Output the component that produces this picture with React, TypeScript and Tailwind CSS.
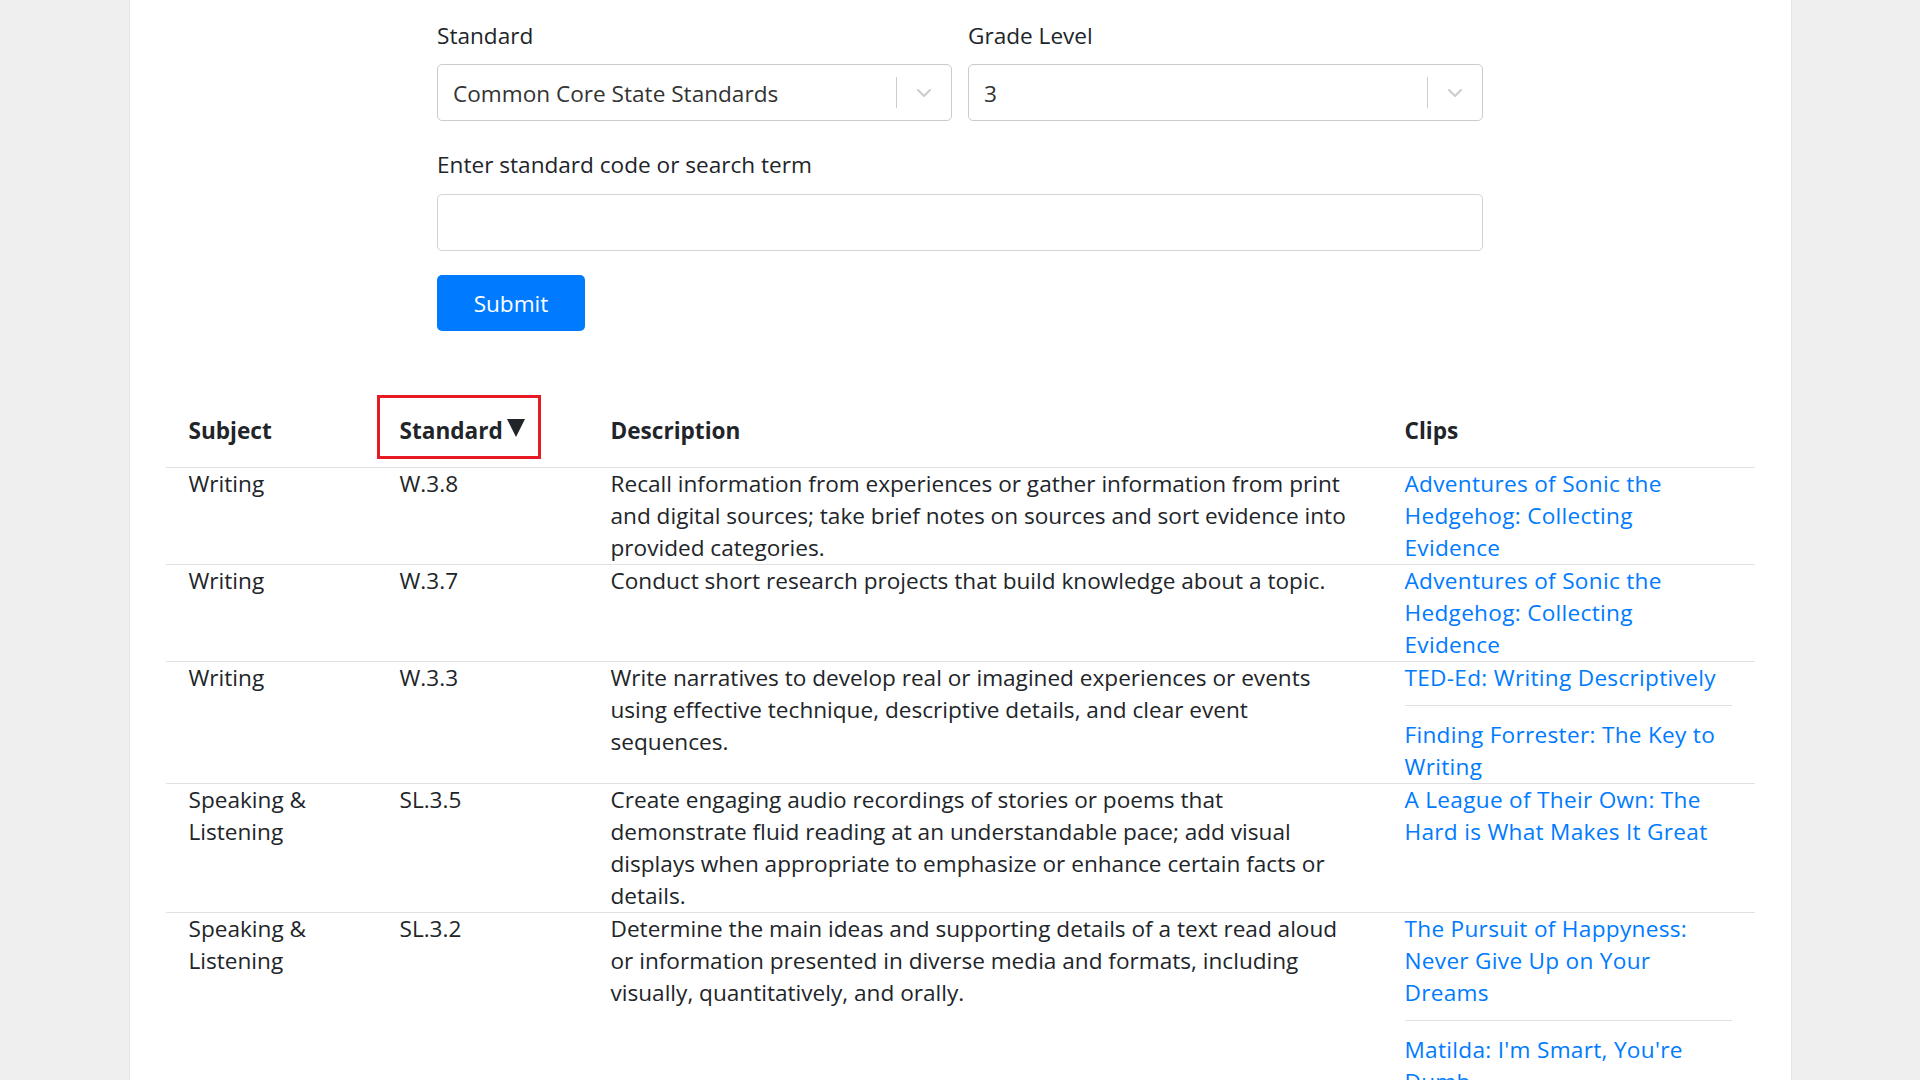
import { ChevronDown } from 'lucide-react'

interface Row {
  subject: string
  code: string
  description: string
  clips: string[]
}

const rows: Row[] = [
  {
    subject: 'Writing',
    code: 'W.3.8',
    description:
      'Recall information from experiences or gather information from print and digital sources; take brief notes on sources and sort evidence into provided categories.',
    clips: ['Adventures of Sonic the Hedgehog: Collecting Evidence'],
  },
  {
    subject: 'Writing',
    code: 'W.3.7',
    description: 'Conduct short research projects that build knowledge about a topic.',
    clips: ['Adventures of Sonic the Hedgehog: Collecting Evidence'],
  },
  {
    subject: 'Writing',
    code: 'W.3.3',
    description:
      'Write narratives to develop real or imagined experiences or events using effective technique, descriptive details, and clear event sequences.',
    clips: ['TED-Ed: Writing Descriptively', 'Finding Forrester: The Key to Writing'],
  },
  {
    subject: 'Speaking & Listening',
    code: 'SL.3.5',
    description:
      'Create engaging audio recordings of stories or poems that demonstrate fluid reading at an understandable pace; add visual displays when appropriate to emphasize or enhance certain facts or details.',
    clips: ['A League of Their Own: The Hard is What Makes It Great'],
  },
  {
    subject: 'Speaking & Listening',
    code: 'SL.3.2',
    description:
      'Determine the main ideas and supporting details of a text read aloud or information presented in diverse media and formats, including visually, quantitatively, and orally.',
    clips: ['The Pursuit of Happyness: Never Give Up on Your Dreams', "Matilda: I'm Smart, You're Dumb"],
  },
]

function SelectBox({ value }: { value: string }) {
  return (
    <div className="flex h-[57px] items-center rounded-[5px] border border-[#cccccc] bg-white">
      <div className="flex-1 pt-[2px] pl-[15px] text-[#333333]">{value}</div>
      <div className="h-[31px] w-px bg-[#cccccc]" />
      <div className="flex w-[54px] items-center justify-center text-[#cccccc]">
        <ChevronDown size={24} strokeWidth={2} />
      </div>
    </div>
  )
}

export default function App() {
  return (
    <div
      className="min-h-screen bg-[#efefef] text-[22.6px] leading-[32px] text-[#212529]"
      style={{ fontFamily: '"Segoe UI", "Open Sans", "Noto Sans", sans-serif' }}
    >
      <div className="mx-auto min-h-screen w-[1663px] border-x border-[#e4e4e4] bg-white px-[36px] pt-[20px]">
        {/* Search form */}
        <div className="mx-auto w-[1046px]">
          <div className="grid grid-cols-2 gap-x-[16px]">
            <div>
              <label className="mb-[12px] block">Standard</label>
              <SelectBox value="Common Core State Standards" />
            </div>
            <div>
              <label className="mb-[12px] block">Grade Level</label>
              <SelectBox value="3" />
            </div>
          </div>
          <div className="mt-[28px]">
            <label className="mb-[13px] block">Enter standard code or search term</label>
            <input className="block h-[57px] w-full rounded-[5px] border border-[#ced4da] px-[16px] outline-none" />
          </div>
          <button className="mt-[24px] h-[56px] w-[148px] rounded-[5px] bg-[#007bff] pt-[2px] text-white">Submit</button>
        </div>

        {/* Results */}
        <table className="mt-[64px] w-full table-fixed border-collapse">
          <colgroup>
            <col className="w-[211px]" />
            <col className="w-[211px]" />
            <col className="w-[794px]" />
            <col />
          </colgroup>
          <thead>
            <tr>
              <th className="border-b border-[#dee2e6] px-[23px] pt-[20px] pb-[20px] text-left font-bold">Subject</th>
              <th className="relative border-b border-[#dee2e6] px-[23px] pt-[20px] pb-[20px] text-left font-bold">
                Standard
                <svg viewBox="0 0 18 18" className="ml-[4px] inline-block h-[18px] w-[18px] align-[2px]">
                  <path d="M0 0H18L9 18Z" fill="#212529" />
                </svg>
                <span className="absolute top-0 left-0 h-[64px] w-[164px] border-[3.5px] border-[#e51a24]" />
              </th>
              <th className="border-b border-[#dee2e6] px-[23px] pt-[20px] pb-[20px] text-left font-bold">Description</th>
              <th className="border-b border-[#dee2e6] px-[23px] pt-[20px] pb-[20px] text-left font-bold">Clips</th>
            </tr>
          </thead>
          <tbody>
            {rows.map((row) => (
              <tr key={row.code}>
                <td className="border-t border-[#dee2e6] px-[23px] align-top">{row.subject}</td>
                <td className="border-t border-[#dee2e6] px-[23px] align-top">{row.code}</td>
                <td className="border-t border-[#dee2e6] px-[23px] align-top">{row.description}</td>
                <td className="border-t border-[#dee2e6] px-[23px] align-top">
                  <ul className="w-fit">
                    {row.clips.map((clip, i) => (
                      <li
                        key={clip}
                        className={
                          i < row.clips.length - 1
                            ? 'border-b border-[#dee2e6] pb-[11px]'
                            : i > 0
                              ? 'mt-[13px]'
                              : ''
                        }
                      >
                        <a href="#" className="tracking-[0.3px] text-[#007bff]">
                          {clip}
                        </a>
                      </li>
                    ))}
                  </ul>
                </td>
              </tr>
            ))}
          </tbody>
        </table>
      </div>
    </div>
  )
}
